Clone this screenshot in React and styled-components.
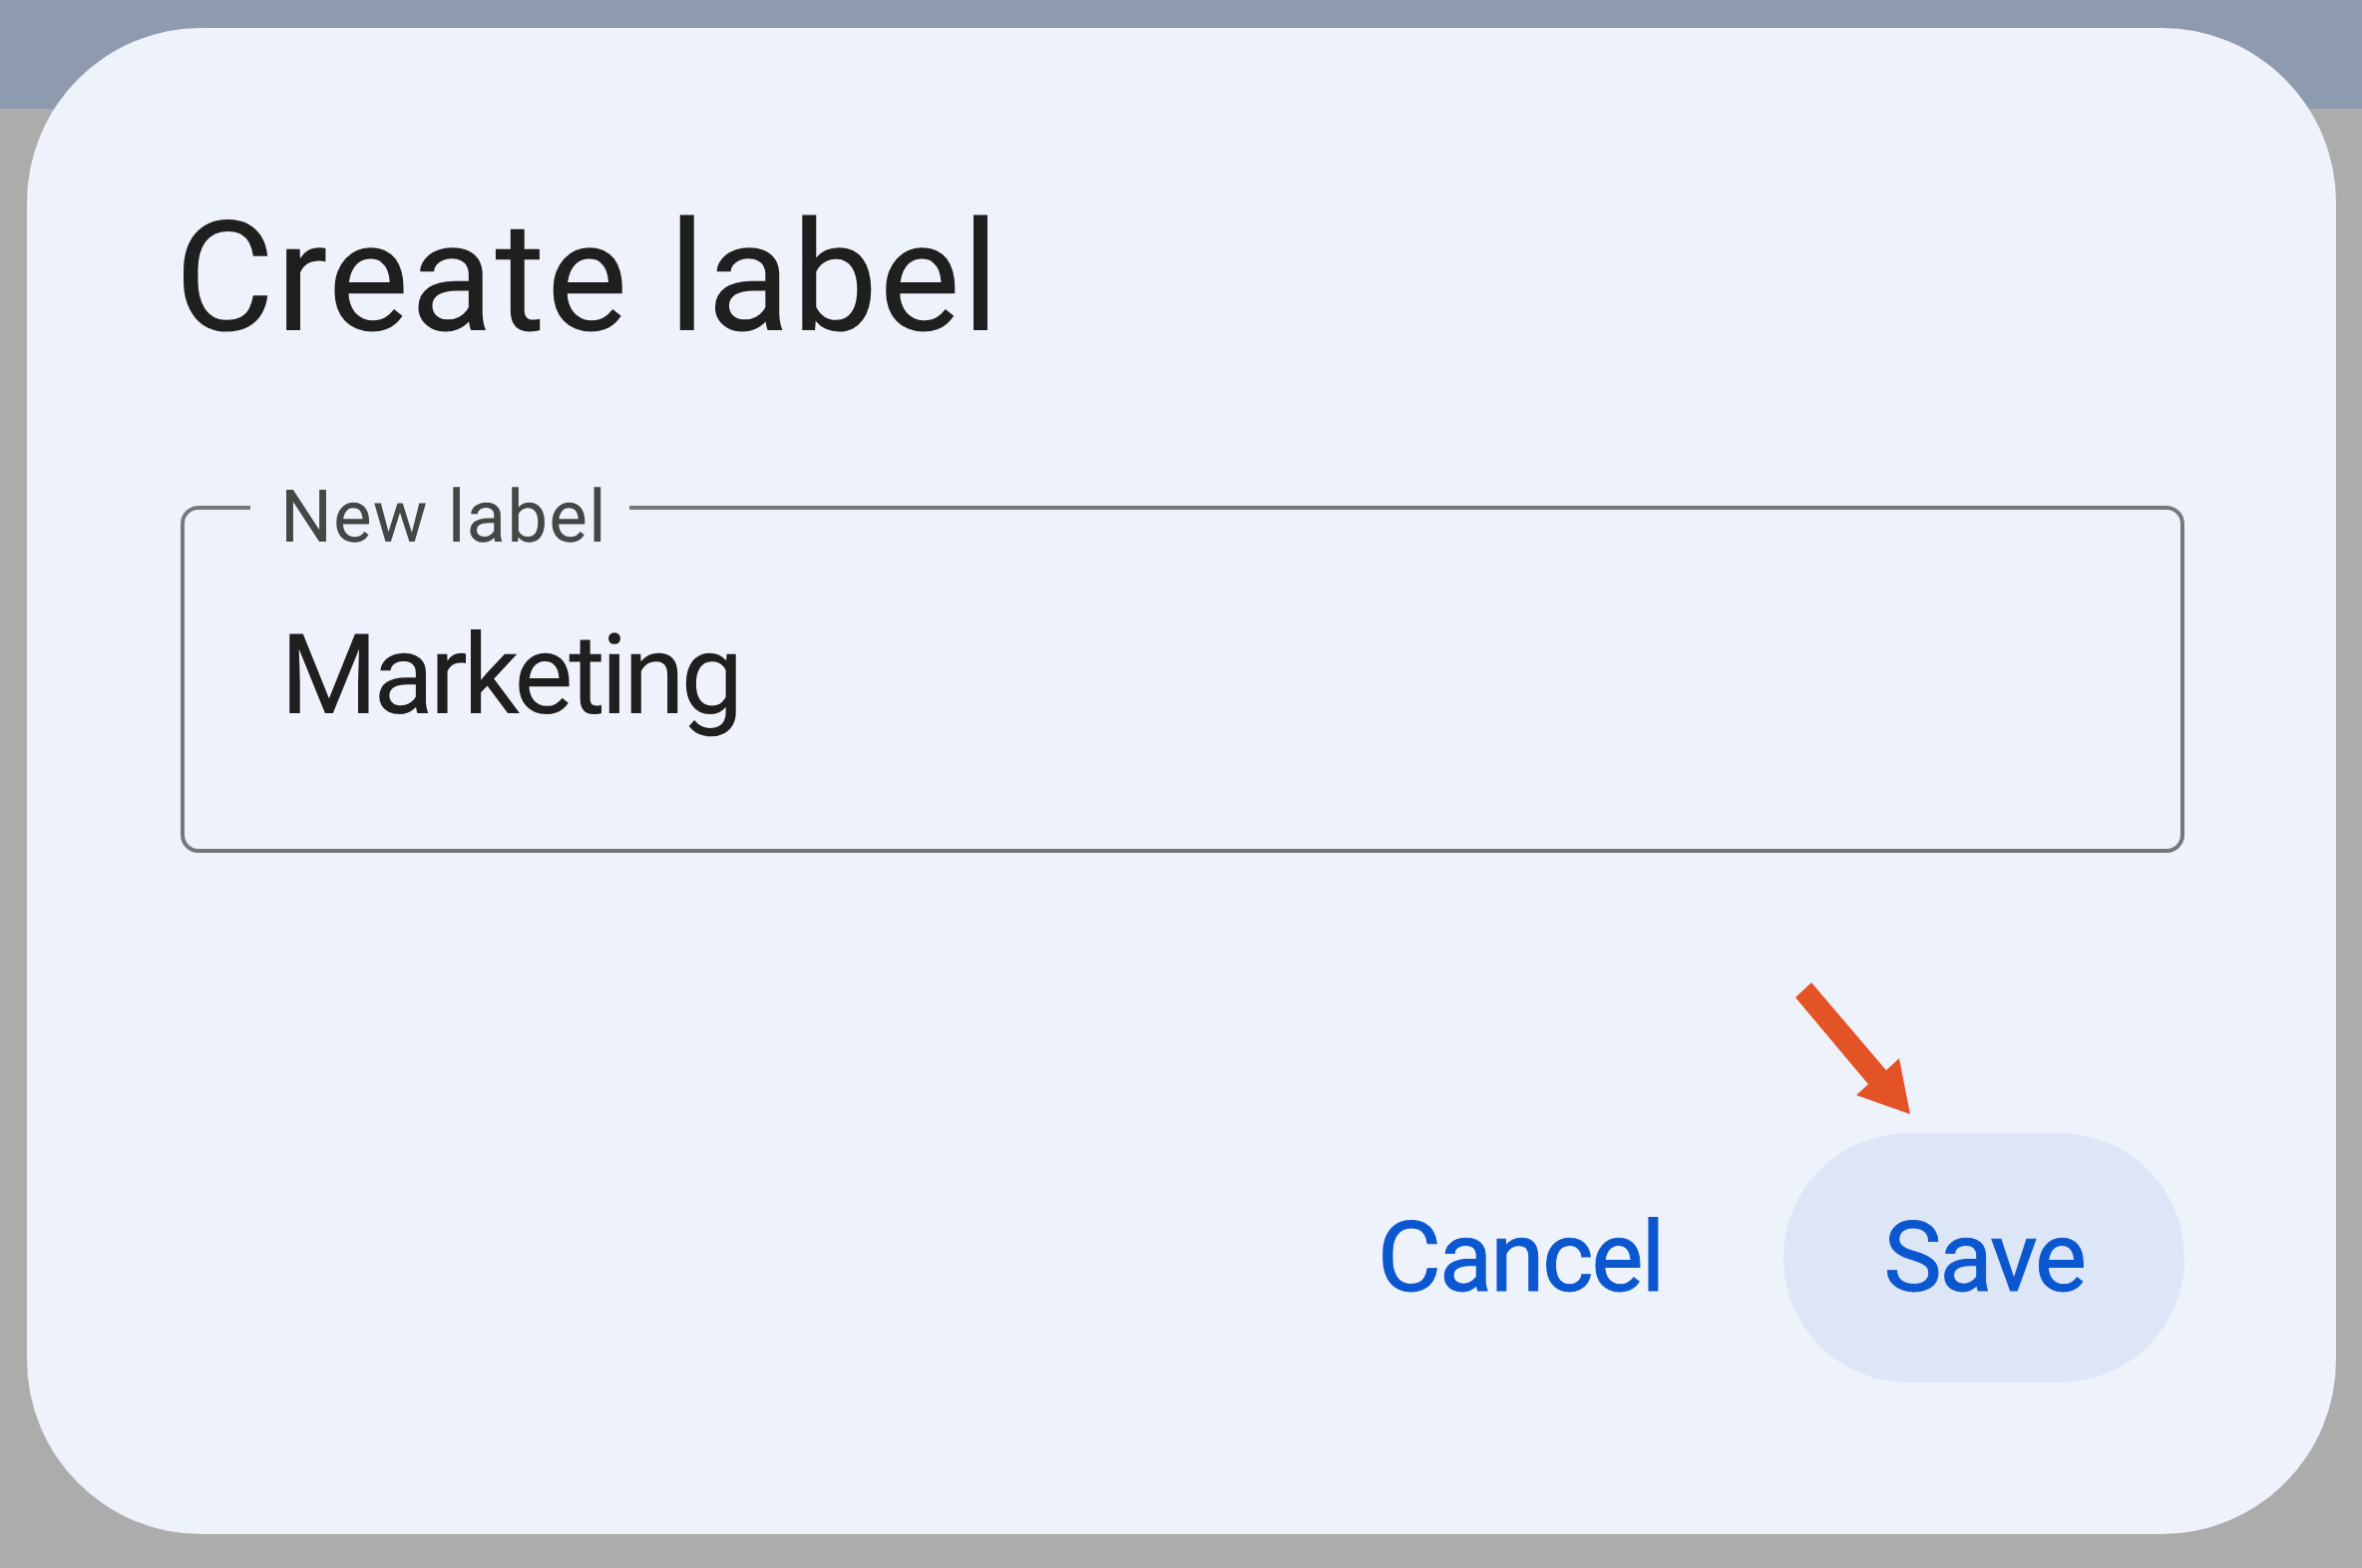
import React from "react";
import styled, { createGlobalStyle } from "styled-components";

const Global = createGlobalStyle`
  html, body { margin: 0; padding: 0; }
  body {
    width: 2368px;
    height: 1572px;
    overflow: hidden;
    font-family: Roboto, "Liberation Sans", sans-serif;
    text-rendering: geometricPrecision;
    -webkit-font-smoothing: antialiased;
  }
`;

const Page = styled.div`
  position: relative;
  width: 2368px;
  height: 1572px;
  display: flex;
  flex-direction: column;
  background: #acacac;
`;

const TopBand = styled.div`
  height: 109px;
  background: #8e9aae;
`;

const Scrim = styled.div`
  flex: 1;
  background: #acacac;
`;

const Dialog = styled.div`
  position: absolute;
  left: 27px;
  top: 28px;
  width: 2315px;
  height: 1510px;
  box-sizing: border-box;
  border-radius: 175px;
  background: #eef2fb;
  padding: 174px 152px 152px 154px;
  display: flex;
  flex-direction: column;
`;

const Title = styled.h1`
  margin: 0 0 0 -6px;
  font-family: Roboto, "Liberation Sans", sans-serif;
  font-weight: 400;
  font-size: 154px;
  line-height: 1;
  color: #1f1f1f;
  letter-spacing: 1.2px;
`;

const Field = styled.fieldset`
  margin: 106px 0 0 0;
  padding: 0 0 0 96px;
  height: 393px;
  box-sizing: border-box;
  border: 4px solid #767977;
  border-radius: 18px;
`;

const Legend = styled.legend`
  margin-left: -30px;
  padding: 20px 22px 0 30px;
  font-size: 73px;
  line-height: 1;
  letter-spacing: 1px;
  color: #444746;
`;

const Value = styled.div`
  margin-top: 67px;
  font-size: 112px;
  line-height: 1;
  letter-spacing: -4.5px;
  color: #1f1f1f;
`;

const Actions = styled.div`
  margin-top: auto;
  display: flex;
  justify-content: flex-end;
  align-items: center;
  gap: 21px;
`;

const TextButton = styled.button`
  position: relative;
  height: 250px;
  padding: 0 100px;
  border: none;
  border-radius: 125px;
  background: ${(p) => (p.$tonal ? "#dde6f7" : "transparent")};
  color: #0b57d0;
  font-family: Roboto, "Liberation Sans", sans-serif;
  font-weight: 400;
  font-size: 98px;
  line-height: 1;
  letter-spacing: -2px;
  text-rendering: geometricPrecision;
  -webkit-text-stroke: 1px #0b57d0;
  cursor: pointer;
`;

const Pointer = styled.svg`
  position: absolute;
  right: 265px;
  top: -161px;
  width: 135px;
  height: 150px;
  overflow: visible;
`;

export default function App() {
  return (
    <>
      <Global />
      <Page>
        <TopBand />
        <Scrim />
        <Dialog>
          <Title>Create label</Title>
          <Field>
            <Legend>New label</Legend>
            <Value>Marketing</Value>
          </Field>
          <Actions>
            <TextButton>Cancel</TextButton>
            <TextButton $tonal>
              Save
              <Pointer viewBox="1790 975 135 150">
                <polygon
                  points="1800,1000 1816,985 1891,1073 1904,1061 1915,1117 1861,1098 1873,1087"
                  fill="#e35326"
                />
              </Pointer>
            </TextButton>
          </Actions>
        </Dialog>
      </Page>
    </>
  );
}
